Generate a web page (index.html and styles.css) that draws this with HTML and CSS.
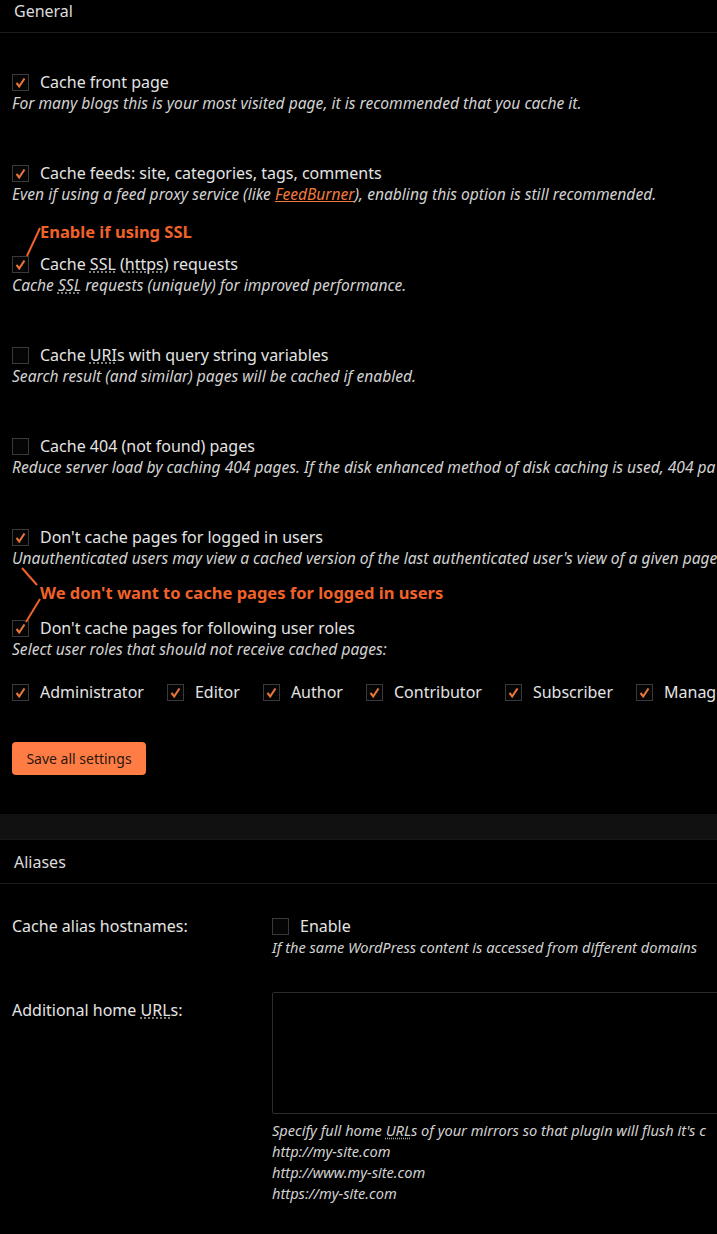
FILE: index.html
```html
<!DOCTYPE html>
<html lang="en">
<head>
  <meta charset="UTF-8">
  <meta name="viewport" content="width=device-width, initial-scale=1">
  <title>Page Cache</title>
  <link rel="stylesheet" href="styles.css">
</head>
<body>

<!-- General -->
<div class="box">
  <h3 class="box-title first">General</h3>
  <div class="box-inside">

    <div class="option">
      <label><span class="cb on"><svg viewBox="0 0 17 17"><path d="M4 9l3 4 6-9"/></svg></span>Cache front page</label>
      <p class="desc">For many blogs this is your most visited page, it is recommended that you cache it.</p>
    </div>

    <div class="option">
      <label><span class="cb on"><svg viewBox="0 0 17 17"><path d="M4 9l3 4 6-9"/></svg></span>Cache feeds: site, categories, tags, comments</label>
      <p class="desc">Even if using a feed proxy service (like <a href="#">FeedBurner</a>), enabling this option is still recommended.</p>
    </div>

    <div class="option">
      <span class="note note-ssl">Enable if using SSL</span>
      <label><span class="cb on"><svg viewBox="0 0 17 17"><path d="M4 9l3 4 6-9"/></svg></span>Cache <abbr>SSL</abbr> (<abbr>https</abbr>) requests</label>
      <p class="desc">Cache <abbr>SSL</abbr> requests (uniquely) for improved performance.</p>
    </div>

    <div class="option">
      <label><span class="cb"></span>Cache <abbr>URI</abbr>s with query string variables</label>
      <p class="desc">Search result (and similar) pages will be cached if enabled.</p>
    </div>

    <div class="option">
      <label><span class="cb"></span>Cache 404 (not found) pages</label>
      <p class="desc">Reduce server load by caching 404 pages. If the disk enhanced method of disk caching is used, 404 pa</p>
    </div>

    <div class="option">
      <label><span class="cb on"><svg viewBox="0 0 17 17"><path d="M4 9l3 4 6-9"/></svg></span>Don't cache pages for logged in users</label>
      <p class="desc">Unauthenticated users may view a cached version of the last authenticated user's view of a given page</p>
    </div>

    <div class="option last">
      <span class="note note-roles">We don't want to cache pages for logged in users</span>
      <label><span class="cb on"><svg viewBox="0 0 17 17"><path d="M4 9l3 4 6-9"/></svg></span>Don't cache pages for following user roles</label>
      <p class="desc">Select user roles that should not receive cached pages:</p>
    </div>

    <div class="roles">
      <label><span class="cb on"><svg viewBox="0 0 17 17"><path d="M4 9l3 4 6-9"/></svg></span>Administrator</label>
      <label><span class="cb on"><svg viewBox="0 0 17 17"><path d="M4 9l3 4 6-9"/></svg></span>Editor</label>
      <label><span class="cb on"><svg viewBox="0 0 17 17"><path d="M4 9l3 4 6-9"/></svg></span>Author</label>
      <label><span class="cb on"><svg viewBox="0 0 17 17"><path d="M4 9l3 4 6-9"/></svg></span>Contributor</label>
      <label><span class="cb on"><svg viewBox="0 0 17 17"><path d="M4 9l3 4 6-9"/></svg></span>Subscriber</label>
      <label><span class="cb on"><svg viewBox="0 0 17 17"><path d="M4 9l3 4 6-9"/></svg></span>Manage</label>
    </div>

    <button class="save-btn">Save all settings</button>
  </div>
</div>

<div class="band"></div>

<!-- Aliases -->
<div class="box">
  <h3 class="box-title">Aliases</h3>
  <div class="form-table">
    <div class="th">Cache alias hostnames:</div>
    <div class="td">
      <label><span class="cb"></span>Enable</label>
      <p class="desc">If the same WordPress content is accessed from different domains</p>
    </div>

    <div class="th urls">Additional home <abbr>URL</abbr>s:</div>
    <div class="td">
      <textarea class="urls-box"></textarea>
      <p class="desc">Specify full home <abbr>URL</abbr>s of your mirrors so that plugin will flush it's c<br>
        http://my-site.com<br>
        http://www.my-site.com<br>
        https://my-site.com</p>
    </div>
  </div>
</div>

<!-- arrows of the annotations -->
<svg class="arrows" width="717" height="1234">
  <path d="M40 228L27 256"/>
  <path d="M22 568L37 585"/>
  <path d="M40 599L26 622"/>
</svg>

</body>
</html>
```

FILE: styles.css
```css
body {
  margin: 0;
  background: #000;
  color: #e4e4e4;
  font-family: "Noto Sans", "Open Sans", sans-serif;
  font-size: 16px;
  overflow: hidden;
  position: relative;
  width: 717px;
  height: 1234px;
}
.box-title {
  margin: 0;
  font-size: 16px;
  font-weight: normal;
  color: #dcdcdc;
  padding: 0 14px;
  height: 44px;
  line-height: 44px;
  border-bottom: 1px solid #1c1c1c;
  box-sizing: border-box;
}
.box-title.first {
  height: 33px;
  line-height: 22px;
}
.box-inside {
  padding: 39px 12px 39px;
}
.option {
  position: relative;
  margin-bottom: 49px;
}
.option.last {
  margin-bottom: 22px;
}
label {
  display: block;
  height: 21px;
  line-height: 21px;
  white-space: nowrap;
}
.desc {
  margin: 0;
  font-style: italic;
  font-size: 15.6px;
  line-height: 21px;
  color: #d2d2d2;
  white-space: nowrap;
}
.desc a {
  color: #f07a3e;
  text-decoration: underline;
}
abbr {
  text-decoration: underline dotted #aaa;
  text-underline-offset: 2px;
}
.cb {
  display: inline-block;
  width: 17px;
  height: 17px;
  border: 1px solid #3a3a3a;
  background: #050505;
  box-sizing: border-box;
  margin-right: 11px;
  vertical-align: -3px;
}
.cb svg {
  display: block;
  width: 15px;
  height: 15px;
}
.cb svg path {
  fill: none;
  stroke: #e8763a;
  stroke-width: 2.4;
}
.note {
  position: absolute;
  left: 28px;
  top: -33px;
  color: #f0622a;
  font-weight: bold;
  font-size: 16.5px;
  line-height: 21px;
  white-space: nowrap;
}
.note-roles {
  top: -36px;
}
.roles {
  display: flex;
  height: 22px;
  white-space: nowrap;
}
.roles label {
  margin-right: 23px;
}
.save-btn {
  display: block;
  margin-top: 38px;
  width: 134px;
  height: 33px;
  background: #ff7d45;
  color: #2a160c;
  border: none;
  border-radius: 4px;
  font-family: "Noto Sans", sans-serif;
  font-size: 14px;
  padding: 0;
  cursor: pointer;
}
.band {
  height: 25px;
  background: #111;
  border-bottom: 1px solid #181818;
}
.form-table {
  display: grid;
  grid-template-columns: 260px 1fr;
  row-gap: 34px;
  padding: 32px 12px 0;
}
.form-table .desc {
  font-size: 14.6px;
}
.th {
  line-height: 21px;
  color: #e4e4e4;
  white-space: nowrap;
}
.th.urls {
  padding-top: 8px;
}
.urls-box {
  display: block;
  box-sizing: border-box;
  width: 520px;
  height: 122px;
  background: #000;
  border: 1px solid #2c2c2c;
  border-radius: 2px;
  margin: 0 0 6px;
  resize: none;
}
.arrows {
  position: absolute;
  left: 0;
  top: 0;
  pointer-events: none;
}
.arrows path {
  stroke: #f0622a;
  stroke-width: 2;
  fill: none;
}
```
